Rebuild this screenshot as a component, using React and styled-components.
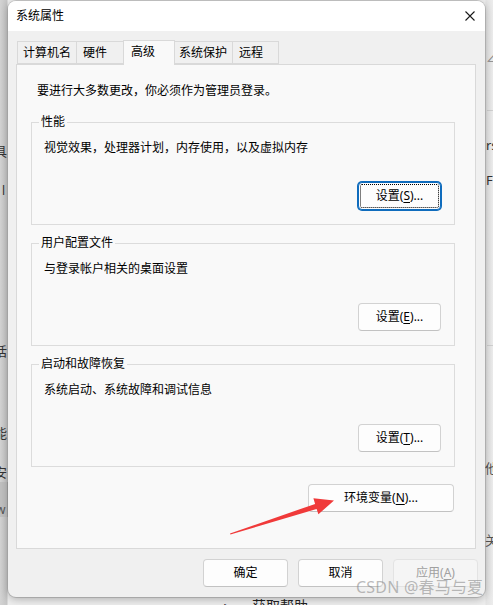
import React from 'react';
import styled, { createGlobalStyle } from 'styled-components';

const Global = createGlobalStyle`
  html, body { margin: 0; padding: 0; }
  body {
    background: #ececec;
    font-family: "Noto Sans", "Noto Sans CJK SC", sans-serif;
    -webkit-font-smoothing: antialiased;
  }
  * { box-sizing: border-box; }
`;

const Desktop = styled.div`
  position: relative;
  width: 493px;
  height: 605px;
  overflow: hidden;
  padding: 1px 8px 0 8px;
  background: linear-gradient(
    90deg,
    #d3d3d3 0,
    #c6c6c6 7px,
    #eeeeee 8px,
    #eeeeee 485px,
    #e4e4e4 486px,
    #ececec 493px
  );
`;

const Fragment = styled.span`
  position: absolute;
  left: ${(p) => p.$x}px;
  top: ${(p) => p.$y}px;
  font-size: ${(p) => p.$size || 13}px;
  color: ${(p) => p.$color || '#333'};
  white-space: nowrap;
  font-family: "Noto Sans", "Noto Sans CJK SC", sans-serif;
`;

const Band = styled.div`
  position: absolute;
  left: ${(p) => p.$x}px;
  top: ${(p) => p.$y}px;
  width: ${(p) => p.$w}px;
  height: ${(p) => p.$h}px;
  background: ${(p) => p.$bg};
`;

const Window = styled.div`
  position: relative;
  z-index: 1;
  width: 477px;
  height: 596px;
  border-radius: 8px;
  background: #f0f0f0;
  box-shadow: 0 0 0 1px rgba(0, 0, 0, 0.14), 0 2px 8px rgba(0, 0, 0, 0.28);
  display: flex;
  flex-direction: column;
  overflow: hidden;
`;

const TitleBar = styled.div`
  height: 30px;
  background: #ffffff;
  display: flex;
  align-items: center;
  justify-content: space-between;
  padding: 0 10px 0 8px;
`;

const Title = styled.span`
  font-size: 12px;
  color: #000;
  line-height: 16px;
`;

const Content = styled.div`
  padding: 10px 0 0 8px;
  display: flex;
  flex-direction: column;
`;

const TabStrip = styled.div`
  display: flex;
  align-items: flex-end;
  height: 24px;
  padding-left: 1px;
  margin-bottom: -1px;
  position: relative;
  z-index: 2;
`;

const Tab = styled.div`
  width: ${(p) => p.$w}px;
  height: ${(p) => (p.$active ? 25 : 23)}px;
  margin-left: ${(p) => (p.$first ? 0 : -1)}px;
  margin-bottom: ${(p) => (p.$active ? 0 : 1)}px;
  border: 1px solid #d9d9d9;
  border-bottom: ${(p) => (p.$active ? 'none' : '1px solid #d9d9d9')};
  background: ${(p) => (p.$active ? '#f9f9f9' : '#f0f0f0')};
  position: relative;
  z-index: ${(p) => (p.$active ? 2 : 1)};
  display: flex;
  align-items: center;
  padding-left: ${(p) => p.$pad}px;
  padding-bottom: ${(p) => (p.$active ? 3 : 0)}px;
  font-size: 12px;
  line-height: 16px;
  color: #000;
`;

const Panel = styled.div`
  width: 460px;
  height: 485px;
  border: 1px solid #d9d9d9;
  background: #f9f9f9;
  padding: 18px 20px 0 14px;
  display: flex;
  flex-direction: column;
`;

const Intro = styled.p`
  margin: 0 0 23px 6px;
  font-size: 12px;
  line-height: 16px;
  color: #000;
`;

const Groups = styled.div`
  display: flex;
  flex-direction: column;
  gap: 18px;
`;

const Group = styled.section`
  position: relative;
  width: 424px;
  border: 1px solid #dcdcdc;
  padding: 17px 12px 14px 12px;
  display: flex;
  flex-direction: column;
`;

const Legend = styled.span`
  position: absolute;
  left: 7px;
  top: -9px;
  padding: 0 2px;
  background: #f9f9f9;
  font-size: 12px;
  line-height: 16px;
  color: #000;
`;

const GroupText = styled.p`
  margin: 0;
  font-size: 12px;
  line-height: 16px;
  color: #000;
`;

const Button = styled.button`
  width: ${(p) => p.$w || 83}px;
  height: 28px;
  padding: 0;
  border-radius: 4px;
  border: 1px solid ${(p) => (p.$focused ? '#0f6cbd' : p.$disabled ? '#e3e3e3' : '#d2d2d2')};
  border-bottom-color: ${(p) => (p.$focused ? '#0f6cbd' : p.$disabled ? '#e3e3e3' : '#c2c2c2')};
  background: ${(p) => (p.$disabled ? '#f5f5f5' : '#fdfdfd')};
  color: ${(p) => (p.$disabled ? '#a0a0a0' : '#000')};
  font-family: "Noto Sans", "Noto Sans CJK SC", sans-serif;
  font-size: 12px;
  line-height: 16px;
  outline: ${(p) => (p.$focused ? '1px dotted #000' : 'none')};
  outline-offset: -3px;
  box-shadow: ${(p) => (p.$focused ? '0 0 0 1px #0f6cbd' : 'none')};
  display: flex;
  align-items: center;
  justify-content: center;
`;

const GroupButton = styled(Button)`
  align-self: flex-end;
  margin-top: 26px;
  margin-right: 1px;
`;

const EnvRow = styled.div`
  display: flex;
  justify-content: flex-end;
  width: 424px;
  padding-right: 1px;
  margin-top: 17px;
`;

const Key = styled.span`
  text-decoration: underline;
  text-underline-offset: 2px;
`;

const Footer = styled.div`
  display: flex;
  justify-content: flex-end;
  gap: 10px;
  padding: 10px 7px 0 0;
`;

const Overlay = styled.svg`
  position: absolute;
  left: 226px;
  top: 494px;
  z-index: 3;
  pointer-events: none;
`;

const Watermark = styled.span`
  position: absolute;
  left: 356px;
  top: 577px;
  z-index: 3;
  font-size: 16px;
  line-height: 20px;
  color: rgba(130, 130, 130, 0.55);
  font-family: "Noto Sans", "Noto Sans CJK SC", sans-serif;
  white-space: nowrap;
  letter-spacing: 0.2px;
`;

const Close = () => (
  <svg width="10" height="10" viewBox="0 0 10 10">
    <path d="M0.5 0.5 L9.5 9.5 M9.5 0.5 L0.5 9.5" stroke="#1a1a1a" strokeWidth="1.1" fill="none" />
  </svg>
);

const Label = ({ text, k }) => (
  <span>
    {text}(<Key>{k}</Key>)...
  </span>
);

const tabs = [
  { t: '计算机名', w: 60, pad: 5 },
  { t: '硬件', w: 48, pad: 6 },
  { t: '高级', w: 52, pad: 7, active: true },
  { t: '系统保护', w: 59, pad: 4 },
  { t: '远程', w: 47, pad: 6 },
];

const groups = [
  { legend: '性能', text: '视觉效果，处理器计划，内存使用，以及虚拟内存', k: 'S', focused: true },
  { legend: '用户配置文件', text: '与登录帐户相关的桌面设置', k: 'E' },
  { legend: '启动和故障恢复', text: '系统启动、系统故障和调试信息', k: 'T' },
];

export default function App() {
  return (
    <>
      <Global />
      <Desktop>
        <Band $x={0} $y={482} $w={8} $h={35} $bg="#c0c0c0" />
        <Band $x={487} $y={110} $w={6} $h={1} $bg="#d0d0d0" />
        <Band $x={487} $y={345} $w={6} $h={1} $bg="#d0d0d0" />
        <Fragment $x={-6} $y={141}>具</Fragment>
        <Fragment $x={2} $y={182} $size={12}>l</Fragment>
        <Fragment $x={-6} $y={341}>话</Fragment>
        <Fragment $x={-6} $y={423}>能</Fragment>
        <Fragment $x={-6} $y={462}>安</Fragment>
        <Fragment $x={-4} $y={501} $size={12} $color="#555">w</Fragment>
        <Fragment $x={486} $y={48} $size={12} $color="#888">∠分</Fragment>
        <Fragment $x={486} $y={136} $size={13}>rs</Fragment>
        <Fragment $x={486} $y={171} $size={13}>Fr</Fragment>
        <Fragment $x={485} $y={458} $size={13} $color="#555">他</Fragment>
        <Fragment $x={485} $y={530} $size={13} $color="#555">关</Fragment>
        <Fragment $x={220} $y={596} $size={14} $color="#222">◔</Fragment>
        <Fragment $x={252} $y={595} $size={14} $color="#222">获取帮助</Fragment>

        <Window>
          <TitleBar>
            <Title>系统属性</Title>
            <Close />
          </TitleBar>
          <Content>
            <TabStrip>
              {tabs.map((tab, i) => (
                <Tab key={tab.t} $w={tab.w} $pad={tab.pad} $active={tab.active} $first={i === 0}>
                  {tab.t}
                </Tab>
              ))}
            </TabStrip>
            <Panel>
              <Intro>要进行大多数更改，你必须作为管理员登录。</Intro>
              <Groups>
                {groups.map((g) => (
                  <Group key={g.legend}>
                    <Legend>{g.legend}</Legend>
                    <GroupText>{g.text}</GroupText>
                    <GroupButton $focused={g.focused}>
                      <Label text="设置" k={g.k} />
                    </GroupButton>
                  </Group>
                ))}
              </Groups>
              <EnvRow>
                <Button $w={146}>
                  <Label text="环境变量" k="N" />
                </Button>
              </EnvRow>
            </Panel>
          </Content>
          <Footer>
            <Button $w={85}>确定</Button>
            <Button $w={85}>取消</Button>
            <Button $w={85} $disabled>
              <span>
                应用(<Key>A</Key>)
              </span>
            </Button>
          </Footer>
        </Window>

        <Overlay width="112" height="44" viewBox="226 494 112 44">
          <polygon
            points="230,533.5 315.1,503.9 313.4,498.2 334,500.5 318.4,514.3 316.6,508.9 230.4,534.5"
            fill="#f03a3a"
          />
        </Overlay>
        <Watermark>CSDN @春马与夏</Watermark>
      </Desktop>
    </>
  );
}
